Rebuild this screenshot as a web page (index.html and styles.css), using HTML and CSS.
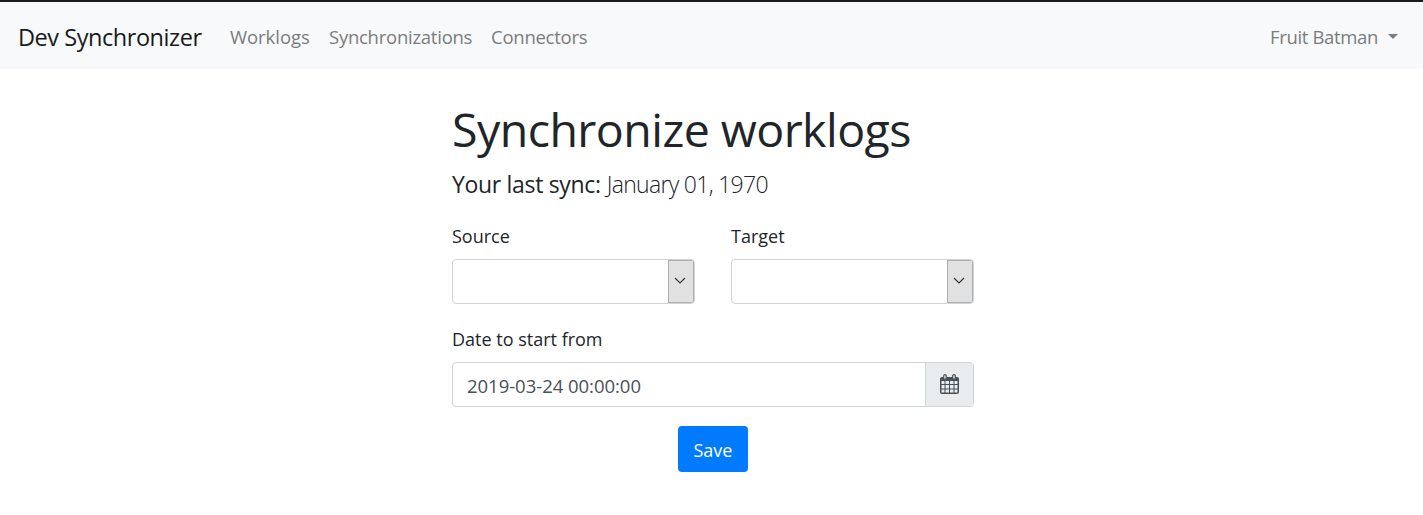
FILE: index.html
```html
<!DOCTYPE html>
<html lang="en">
<head>
<meta charset="utf-8">
<title>Dev Synchronizer</title>
<link rel="stylesheet" href="styles.css">
</head>
<body>
<nav class="navbar">
  <a class="brand">Dev Synchronizer</a>
  <a class="nav-link worklogs">Worklogs</a>
  <a class="nav-link syncs">Synchronizations</a>
  <a class="nav-link connectors">Connectors</a>
  <a class="nav-link user">Fruit Batman<span class="caret"></span></a>
</nav>
<main class="content">
  <h1 class="title">Synchronize worklogs</h1>
  <p class="lead"><strong class="lead-label">Your last sync:</strong> <span class="lead-date">January 01, 1970</span></p>
  <form class="form">
    <div class="row">
      <div class="field">
        <label class="label">Source</label>
        <div class="select"><span class="arrow"><svg width="12" height="8" viewBox="0 0 12 8"><path d="M1 1l5 5 5-5" fill="none" stroke="#333" stroke-width="1.1"/></svg></span></div>
      </div>
      <div class="field">
        <label class="label">Target</label>
        <div class="select"><span class="arrow"><svg width="12" height="8" viewBox="0 0 12 8"><path d="M1 1l5 5 5-5" fill="none" stroke="#333" stroke-width="1.1"/></svg></span></div>
      </div>
    </div>
    <label class="label">Date to start from</label>
    <div class="input-group">
      <div class="input">2019-03-24 00:00:00</div>
      <div class="addon"><svg width="19" height="20" viewBox="0 0 19 20"><path fill="#495057" fill-rule="evenodd" d="M2 3h15q2 0 2 2v13q0 2-2 2H2q-2 0-2-2V5q0-2 2-2zM1.500 7v3h3V7zM5.500 7v3H9V7zM10 7v3h3.500V7zM14.500 7v3h3V7zM1.500 11v3.500h3V11zM5.500 11v3.500H9V11zM10 11v3.500h3.500V11zM14.500 11v3.500h3V11zM1.500 15.500v3h3v-3zM5.500 15.500v3H9v-3zM10 15.500v3h3.500v-3zM14.500 15.500v3h3v-3z"/><rect x="3.700" y="0.700" width="2.600" height="4.600" rx="1.300" fill="#e9ecef" stroke="#495057" stroke-width="1.200"/><rect x="12.700" y="0.700" width="2.600" height="4.600" rx="1.300" fill="#e9ecef" stroke="#495057" stroke-width="1.200"/></svg></div>
    </div>
    <button class="save" type="button">Save</button>
  </form>
</main>
</body>
</html>
```
FILE: styles.css
```css
* { box-sizing: border-box; }
body { margin: 0; background: #fff; color: #212529; font: 18px/27px "Open Sans", "Noto Sans", sans-serif; }
.navbar { display: flex; align-items: center; height: 69px; padding: 4px 25px 0 18px; border-top: 2px solid #1b1b1b; background: #f8f9fa; }
.brand { width: 212px; font-size: 23.5px; letter-spacing: -0.45px; color: #191a1b; white-space: nowrap; }
.nav-link { padding-bottom: 2px; color: #7b7c7d; font-size: 18.5px; letter-spacing: -0.25px; white-space: nowrap; }
.worklogs { width: 99px; letter-spacing: -0.05px; }
.syncs { width: 162px; }
.user { display: flex; align-items: center; margin-left: auto; letter-spacing: -0.35px; }
.caret { margin-left: 10px; border: 5px solid transparent; border-top-color: #7b7c7d; border-bottom: 0; }
.content { width: 522px; margin: 32px 0 0 452px; }
.title { margin: 0; height: 66px; font-size: 46.5px; line-height: 56px; font-weight: 400; letter-spacing: -0.55px; white-space: nowrap; }
.lead { margin: 0 0 22px; height: 34px; font-size: 23px; line-height: 34px; font-weight: 300; white-space: nowrap; }
.lead-label { font-weight: 500; letter-spacing: -0.32px; }
.lead-date { letter-spacing: -0.7px; }
.row { display: flex; gap: 36px; margin-bottom: 22px; }
.field { flex: 1; }
.label { display: block; height: 27px; margin-bottom: 9px; }
.select { display: flex; justify-content: flex-end; height: 45px; border: 1px solid #ced4da; border-radius: 4px; overflow: hidden; }
.arrow { display: flex; width: 26px; padding: 0 2px 2px 0; align-items: center; justify-content: center; border: 1px solid #adadad; background: #e1e1e1; }
.input-group { display: flex; height: 45px; border: 1px solid #ced4da; border-radius: 4px; overflow: hidden; }
.input { flex: 1; padding: 9px 14px; color: #495057; font-size: 18.5px; letter-spacing: -0.03px; }
.addon { display: flex; width: 48px; padding-bottom: 1px; align-items: center; justify-content: center; border-left: 1px solid #ced4da; background: #e9ecef; }
.save { display: block; width: 70px; height: 46px; margin: 19px 0 0 226px; padding: 3px 0 0; border: 0; border-radius: 4px; background: #007bff; color: #fff; font: inherit; }
```
